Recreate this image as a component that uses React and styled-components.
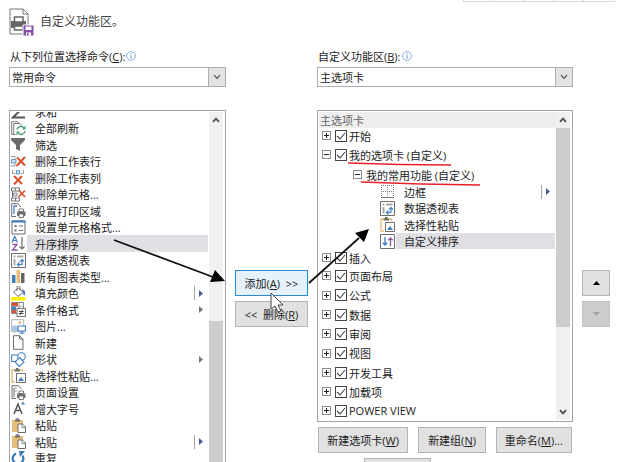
import React, { useState } from "react";
import styled, { createGlobalStyle, css } from "styled-components";

const GlobalStyle = createGlobalStyle`
  * { box-sizing: border-box; }
  body { margin: 0; background: #fff; }
  body, button, select, input {
    font-family: "Open Sans", "Noto Sans CJK SC", sans-serif;
    font-size: 11px;
    color: #1c1c1c;
  }
`;

const Page = styled.div`
  position: relative;
  height: 100vh;
  overflow: hidden;
  display: flex;
  flex-direction: column;
  padding: 0 10px 0 9px;
`;

const TopStrip = styled.div`
  flex: none;
  align-self: flex-end;
  display: grid;
  grid-template-columns: repeat(5, 30px);
  height: 2px;
  margin-right: -5px;
  border: 1px solid #d9d9d9;
  border-top: 0;
`;

const TopCell = styled.span`
  border-right: 1px solid #d9d9d9;
`;

const Header = styled.header`
  flex: none;
  display: flex;
  gap: 5px;
  height: 42px;
  padding-top: 6px;
`;

const Title = styled.h1`
  margin: 6px 0 0;
  font-size: 12px;
  line-height: 16px;
  font-weight: 400;
  color: #444;
`;

const Columns = styled.main`
  flex: 1;
  min-height: 0;
  display: grid;
  grid-template-columns: minmax(0, 217fr) 73px minmax(0, 256fr) 28px;
  grid-template-rows: minmax(0, 1fr);
  column-gap: 9px;
`;

const Column = styled.section`
  min-width: 0;
  min-height: 0;
  display: flex;
  flex-direction: column;
`;

const FieldLabel = styled.label`
  flex: none;
  display: flex;
  align-items: center;
  gap: 1px;
  height: 23px;
  padding-left: 1px;
`;

const SelectWrap = styled.div`
  flex: none;
  position: relative;
  height: 20px;
  margin-bottom: 23px;
`;

const Select = styled.select`
  display: block;
  width: 100%;
  height: 100%;
  padding: 0 20px 0 2px;
  appearance: none;
  border: 1px solid #abadb3;
  border-radius: 0;
  background: #fff;
`;

const SelectArrow = styled.span`
  position: absolute;
  inset: 0 0 0 auto;
  width: 18px;
  display: grid;
  place-items: center;
  border: 1px solid #acacac;
  background: #e3e3e3;
  pointer-events: none;
`;

const Box = styled.div`
  flex: none;
  display: flex;
  min-height: 0;
  overflow: hidden;
  padding: 1px 2px 1px 1px;
  border: 1px solid #9fa5b0;
  ${(p) => p.$fill && css`
    flex: 1;
    border-bottom: 0;
    padding-bottom: 0;
  `}
`;

const Bar = styled.div`
  flex: none;
  width: 14px;
  display: flex;
  flex-direction: column;
  background: #f0f0f0;
`;

const BarButton = styled.button`
  flex: none;
  height: 16px;
  padding: 0;
  border: 0;
  display: grid;
  place-items: center;
  background: #f0f0f0;
`;

const Thumb = styled.span`
  flex: none;
  height: ${(p) => p.$size}px;
  margin-top: ${(p) => p.$start}px;
  background: #cdcdcd;
`;

const ListView = styled.div`
  flex: 1;
  min-width: 0;
  min-height: 0;
  overflow: hidden;
`;

const CommandList = styled.ul`
  margin: -9px 0 0;
  padding: 0;
  list-style: none;
  display: grid;
  grid-auto-rows: 17px 16px;
`;

const Command = styled.li`
  display: flex;
  align-items: center;
  padding-right: 1px;
`;

const CommandIcon = styled.span`
  flex: none;
  display: grid;
  width: 16px;
`;

const CommandName = styled.span`
  flex: 1;
  align-self: stretch;
  display: flex;
  align-items: center;
  justify-content: space-between;
  padding: 0 5px 0 8px;
  white-space: nowrap;
  background: ${(p) => (p.$selected ? "#e0dfe4" : "transparent")};
`;

const Menu = styled.span`
  height: 14px;
  padding-left: 4px;
  display: flex;
  align-items: center;
  border-left: 1px solid ${(p) => (p.$split ? "#a6a6a6" : "transparent")};
`;

const ActionColumn = styled.div`
  display: flex;
  flex-direction: column;
  gap: 5px;
  padding-top: 226px;
`;

const Button = styled.button`
  flex: none;
  height: 26px;
  padding: 0;
  display: flex;
  align-items: center;
  justify-content: center;
  white-space: pre;
  border: 1px solid ${(p) => (p.$hot ? "#2a8ad4" : "#b5b5b5")};
  border-radius: 0;
  background: ${(p) => (p.$hot ? "#e5f1fb" : "#e1e1e1")};
  &:disabled {
    background: #cccccc;
    border-color: #c3c3c3;
  }
`;

const Tree = styled.ul`
  margin: 0;
  padding: 0;
  list-style: none;
  display: grid;
  grid-template-rows: 16px 15px 23px 17px 17px 16px 17px 16px 17px 19px 20px 19px 19px 20px 19px 19px 19px;
`;

const TreeHeading = styled.li`
  display: flex;
  align-items: center;
  padding-left: 1px;
  color: #666;
  background: #eeeeee;
`;

const TreeRow = styled.li`
  display: flex;
  align-items: center;
  padding-left: ${(p) => (p.$nested ? 34 : 3)}px;
`;

const TreeCommand = styled.li`
  display: flex;
  align-items: center;
  padding: 0 1px 0 61px;
`;

const Expander = styled.button`
  flex: none;
  width: 9px;
  height: 9px;
  padding: 0;
  display: grid;
  place-items: center;
  border: 1px solid #8e8e8e;
  background: #fff;
`;

const TabLabel = styled.label`
  display: flex;
  align-items: center;
  gap: 2px;
  padding-left: 4px;
  white-space: nowrap;
`;

const Tick = styled.input`
  appearance: none;
  width: 12px;
  height: 12px;
  margin: 0;
  border: 1px solid #444;
  background: #fff;
  &:checked {
    background: #fff url("data:image/svg+xml,%3Csvg xmlns='http://www.w3.org/2000/svg' viewBox='0 0 10 10'%3E%3Cpath d='M1 5l3 3 5-6' fill='none' stroke='%23444' stroke-width='1.1'/%3E%3C/svg%3E");
  }
`;

const ButtonRow = styled.div`
  flex: none;
  display: grid;
  grid-template-columns: 90fr 67fr 76fr;
  column-gap: 10px;
  margin-top: 5px;
  padding: 0 1px;
`;

const ResetRow = styled.div`
  flex: none;
  display: grid;
  grid-template-columns: 67px;
  margin: 5px 0 0 47px;
`;

const TreeBar = styled(Bar)`
  justify-content: space-between;
`;

const BarTop = styled.div`
  display: flex;
  flex-direction: column;
`;

const Overlay = styled.svg`
  position: absolute;
  left: 0;
  top: 0;
  pointer-events: none;
`;

const Info = () => (
  <svg width="10" height="10" viewBox="0 0 10 10" fill="none" stroke="#7fa9dc">
    <circle cx="5" cy="5" r="4.4" strokeWidth=".9" />
    <path d="M5 2.2v1.2M5 4.3v3.4" strokeWidth="1.2" />
  </svg>
);

const Chevron = ({ up, bold }) => (
  <svg width="8" height="6" viewBox="0 0 8 6" fill="none" stroke="#505050" strokeWidth={bold ? 1.8 : 1.2}>
    <path d={up ? "M1 4.8L4 1.6l3 3.2" : "M1 1.2l3 3.2 3-3.2"} />
  </svg>
);

const Flyout = ({ split }) => (
  <Menu $split={split}>
    <svg width="4" height="7" viewBox="0 0 4 7">
      <path d="M0 0l4 3.5L0 7z" fill={split ? "#4a5c9c" : "#777"} />
    </svg>
  </Menu>
);

const G = "#6d6d6d";
const B = "#3f7fbf";
const R = "#d9502e";
const T = "#e8bd78";

const printer = (
  <g>
    <path d="M6 8.500h8.500v4.500H6z" fill={G} />
    <path d="M8 6h4.500v2.500H8zM8 11h4.500v3.500H8z" fill="#fff" stroke={G} strokeWidth=".9" />
  </g>
);

const drawings = {
  sum: <path d="M2 1h11M2 1l6 6.500-6 6h12" fill="none" stroke="#555" strokeWidth="2" />,
  refresh: (
    <g fill="none">
      <path d="M3 13.500H.7V.7h6l1.500 1.500M4.500 13.500H2.700V2.500h6L11 4.500" stroke={G} strokeWidth=".9" />
      <path d="M6 8.500a4 4 0 0 1 7-1.500M14 10a4 4 0 0 1-7 2" stroke="#4c9f78" strokeWidth="1.500" />
      <path d="M14.500 4.500v4H11zM5.500 14.500v-4H9z" fill="#4c9f78" />
    </g>
  ),
  filter: <path d="M0 1h14v2L9 8v6l-4-2V8L0 3z" fill="#6a6a6a" />,
  row: (
    <g fill="none">
      <path d="M0 2.500h4M0 12h4M4 2.500v2M4 10v2" stroke="#999" />
      <path d="M.5 5.500H5v3.500H.5z" fill="#cfe0f2" stroke={B} strokeWidth=".8" />
      <path d="M6 3.500l8 8M14 3l-8.500 9" stroke={R} strokeWidth="2" />
    </g>
  ),
  column: (
    <g fill="none">
      <path d="M1.500 0v3.500h3M12.500 0v3.500h-3" stroke="#999" />
      <path d="M5.500 0h3v4h-3z" fill="#cfe0f2" stroke={B} strokeWidth=".8" />
      <path d="M3 6l8 8M11 6l-8 8.500" stroke={R} strokeWidth="2" />
    </g>
  ),
  cells: (
    <g fill="none">
      <path d="M.5 1h8v3h-8zM4.500 1v3M.5 11h8v3h-8zM4.500 11v3M1.500 4v7" stroke="#777" />
      <path d="M2.500 6H6v3H2.500z" fill="#dfe6ee" stroke="#777" strokeWidth=".8" />
      <path d="M8 3.500l6 6.500M14 3.500L7.500 10" stroke={R} strokeWidth="1.700" />
    </g>
  ),
  area: (
    <g fill="none">
      <path d="M5 13.500H.7V.7H7L10 4" stroke={G} />
      <path d="M3 3v8M3 3h3" stroke={B} strokeWidth="1.300" />
      {printer}
    </g>
  ),
  format: (
    <g fill="none">
      <path d="M1 1h13v13H1z" fill="#fff" stroke={G} />
      <path d="M.5 1.500h14" stroke={B} strokeWidth="2" />
      <path d="M3.500 6h2M3.500 10.500h2" stroke={G} strokeWidth="1.800" />
      <path d="M8 6h4M8 10.500h4" stroke={G} />
    </g>
  ),
  az: (
    <g fill="none">
      <path d="M1 6.500L3.700 0l2.700 6.500M2 4.500h3.500" stroke={B} strokeWidth="1.200" />
      <path d="M1.500 8.500H6L1.500 14H6.500" stroke="#8c55a8" strokeWidth="1.300" />
      <path d="M11 1v12M8.500 10.500L11 13l2.500-2.500" stroke={G} strokeWidth="1.200" />
    </g>
  ),
  pivot: (
    <g fill="none">
      <path d="M.5 .5h14v14H.5z" fill="#fff" stroke={G} />
      <path d="M2.500 2.500h2v2h-2zM6 2.500h6.500v2H6zM2.500 6h2v6.500h-2z" fill="#aaa" />
      <path d="M6.500 11.500H11V7" stroke={B} strokeWidth="1.200" />
      <path d="M8.500 9.500l-2 2 2 2M9 8.500l2-2 2 2" stroke={B} strokeWidth="1.200" />
    </g>
  ),
  chart: (
    <g>
      <path d="M1 6h3.500v8H1z" fill={B} />
      <path d="M5.500 1H9v13H5.500z" fill={T} />
      <path d="M10 4h3.500v10H10z" fill="#666" />
    </g>
  ),
  fill: (
    <g fill="none">
      <path d="M2.500 6l5-4 4.500 4.500-5 4z" fill="#fff" stroke={G} />
      <path d="M6 5V1.500a1.500 1.500 0 0 1 3 0v3" stroke={G} />
      <path d="M10.500 3.500c3 0 4 1.500 3.500 6-2-.5-2-2.500-2-4z" fill={B} />
      <path d="M0 11h14.500v3.500H0z" fill="#fff200" />
    </g>
  ),
  conditional: (
    <g fill="none">
      <path d="M.5 .5h12v11H.5z" fill="#fff" stroke="#888" />
      <path d="M1 1h6v3H1zM1 8h4v3H1z" fill={R} />
      <path d="M1 4.500h4V8H1z" fill={B} />
      <path d="M.5 4.300h12M.5 8h12M8 .5v7" stroke="#888" strokeWidth=".7" />
      <path d="M6 6.500h8.500v8H6z" fill="#fff" stroke={G} />
      <path d="M8 9.500h4.500M8 11.500h4.500M11.500 8l-2.500 5" stroke="#333" strokeWidth=".9" />
    </g>
  ),
  picture: (
    <g fill="none">
      <path d="M.7 .7h12v12H.7z" fill="#fff" stroke="#999" strokeWidth=".8" />
      <circle cx="9" cy="3.500" r="1.500" fill={T} />
      <path d="M1 12V8l3-2 3 3v3z" fill="#a9c8e8" />
      <path d="M7 7h7.500v5H7z" fill="#fff" stroke={B} strokeWidth="1.200" />
      <path d="M8.500 14.300h5M11 12v2" stroke={B} />
    </g>
  ),
  page: <path d="M2.500 .7h6L12 4v10.300H2.500zM8.500 .7V4H12" fill="#fff" stroke={G} />,
  shapes: (
    <g fill="#fff" stroke={B} strokeWidth="1.100">
      <path d="M.7 3h7v6.500h-7z" />
      <circle cx="10.500" cy="4.500" r="3.800" />
      <path d="M8.500 5.500l4.500 4.500-4.500 4.500L4 10z" />
    </g>
  ),
  special: (
    <g fill="none">
      <path d="M4 14H1V2h10.500v2" stroke={T} strokeWidth="1.400" />
      <path d="M3.500 3.500v-2H5V0h2.500v1.500H9v2z" fill={G} />
      <path d="M5.500 5.500h9v9h-9z" fill="#fff" stroke={G} />
      <path d="M7 13l3-4 3 4z" fill={B} />
    </g>
  ),
  setup: (
    <g fill="none">
      <path d="M5 13.500H1V.7h6.500L10.500 4M3 3v9" stroke={G} />
      <path d="M3 3h3M3 6h3" stroke="#999" />
      {printer}
    </g>
  ),
  grow: (
    <g fill="none">
      <path d="M3 13L7 3l4 10M4.500 9.500h5" stroke="#555" strokeWidth="1.500" />
      <path d="M10 3.500L12 .5l2 3z" fill={B} />
    </g>
  ),
  paste: (
    <g>
      <path d="M1 2h11v12H1z" fill={T} />
      <path d="M4 3.500v-2h1.500V0h2v1.500H9v2z" fill={G} />
      <path d="M7 6h4.500L14.500 9v5.500H7z" fill="#fff" stroke={G} />
      <path d="M11 6v3.500h3.500" fill="none" stroke={G} strokeWidth=".8" />
    </g>
  ),
  redo: (
    <g fill="none">
      <path d="M5 2.500a5.300 5.300 0 1 0 6.500 2" stroke="#3a78b5" strokeWidth="2.200" />
      <path d="M8 0h6l-5 6z" fill="#3a78b5" />
    </g>
  ),
  border: (
    <g fill="none" stroke="#777">
      <path d="M1.500 1v12M7.500 1v12M13.500 1v12M1 1.500h13M1 7.500h13" strokeDasharray="1 1" />
      <path d="M1 13.500h13" />
    </g>
  ),
  sort: (
    <g fill="none">
      <path d="M.5 .5h14v14H.5z" fill="#fff" stroke={G} />
      <path d="M5 3v8M2.800 8.800L5 11l2.200-2.200" stroke={B} strokeWidth="1.300" />
      <path d="M10.500 12V4M8.300 6.200L10.500 4l2.200 2.200" stroke="#8c55a8" strokeWidth="1.300" />
    </g>
  ),
};

const Icon = ({ name }) => (
  <CommandIcon>
    <svg width="15" height="15" viewBox="0 0 15 15">{drawings[name]}</svg>
  </CommandIcon>
);

const commands = [
  ["sum", "求和"],
  ["refresh", "全部刷新"],
  ["filter", "筛选"],
  ["row", "删除工作表行"],
  ["column", "删除工作表列"],
  ["cells", "删除单元格..."],
  ["area", "设置打印区域"],
  ["format", "设置单元格格式..."],
  ["az", "升序排序"],
  ["pivot", "数据透视表"],
  ["chart", "所有图表类型..."],
  ["fill", "填充颜色", "split"],
  ["conditional", "条件格式", "menu"],
  ["picture", "图片..."],
  ["page", "新建"],
  ["shapes", "形状", "menu"],
  ["special", "选择性粘贴..."],
  ["setup", "页面设置"],
  ["grow", "增大字号"],
  ["paste", "粘贴"],
  ["paste", "粘贴", "split"],
  ["redo", "重复"],
];

const groupCommands = [
  ["border", "边框", "split"],
  ["pivot", "数据透视表"],
  ["special", "选择性粘贴"],
  ["sort", "自定义排序"],
];

const tabs = ["插入", "页面布局", "公式", "数据", "审阅", "视图", "开发工具", "加载项", "POWER VIEW"];

const CommandText = ({ name, menu, selected }) => (
  <CommandName $selected={selected}>
    {name}
    {menu && <Flyout split={menu === "split"} />}
  </CommandName>
);

const Toggle = ({ open, name }) => (
  <Expander aria-label={`${open ? "折叠" : "展开"} ${name}`}>
    <svg width="7" height="7" viewBox="0 0 7 7" stroke="#222">
      <path d={open ? "M1 3.500h5" : "M1 3.500h5M3.500 1v5"} />
    </svg>
  </Expander>
);

const TabRow = ({ name, open }) => {
  const [checked, setChecked] = useState(true);
  return (
    <TreeRow>
      <Toggle open={open} name={name} />
      <TabLabel>
        <Tick type="checkbox" checked={checked} onChange={() => setChecked(!checked)} />
        {name}
      </TabLabel>
    </TreeRow>
  );
};

export default function App() {
  return (
    <Page>
      <GlobalStyle />
      <TopStrip>
        <TopCell /><TopCell /><TopCell /><TopCell />
      </TopStrip>
      <Header>
        <svg width="26" height="29" viewBox="0 0 26 29" fill="none">
          <path d="M1 1h13l5 5v20H1z" fill="#fff" stroke="#777" />
          <path d="M14 1v5h5" stroke="#777" />
          <path d="M2 13h15v7H2z" fill="#666" />
          <path d="M5.500 9h8.500v5H5.500zM5.500 18h8.500v4H5.500z" fill="#fff" stroke="#666" strokeWidth="1.500" />
          <path d="M14 17h11v11H14z" fill="#8250a5" stroke="#fff" />
          <path d="M16.500 18.500h6v3.500h-6zM17 24.500h5v3h-5z" fill="#fff" />
          <path d="M18 25h1.500v2.500H18z" fill="#8250a5" />
        </svg>
        <Title>自定义功能区。</Title>
      </Header>
      <Columns>
        <Column>
          <FieldLabel htmlFor="source">
            <span>从下列位置选择命令(<u>C</u>):</span>
            <Info />
          </FieldLabel>
          <SelectWrap>
            <Select id="source"><option>常用命令</option></Select>
            <SelectArrow><Chevron /></SelectArrow>
          </SelectWrap>
          <Box $fill>
            <ListView>
              <CommandList role="listbox" aria-label="常用命令">
                {commands.map(([icon, name, menu], i) => (
                  <Command key={i} role="option" aria-selected={icon === "az"}>
                    <Icon name={icon} />
                    <CommandText name={name} menu={menu} selected={icon === "az"} />
                  </Command>
                ))}
              </CommandList>
            </ListView>
            <Bar>
              <BarButton aria-label="向上滚动"><Chevron up bold /></BarButton>
              <Thumb $start={193} $size={300} />
            </Bar>
          </Box>
        </Column>
        <ActionColumn>
          <Button $hot>添加(<u>A</u>)  &gt;&gt;</Button>
          <Button>&lt;&lt;  删除(<u>R</u>)</Button>
        </ActionColumn>
        <Column>
          <FieldLabel htmlFor="target">
            <span>自定义功能区(<u>B</u>):</span>
            <Info />
          </FieldLabel>
          <SelectWrap>
            <Select id="target"><option>主选项卡</option></Select>
            <SelectArrow><Chevron /></SelectArrow>
          </SelectWrap>
          <Box>
            <ListView>
              <Tree>
                <TreeHeading>主选项卡</TreeHeading>
                <TabRow name="开始" />
                <TabRow name="我的选项卡 (自定义)" open />
                <TreeRow $nested>
                  <Toggle open name="我的常用功能" />
                  <TabLabel as="span">我的常用功能 (自定义)</TabLabel>
                </TreeRow>
                {groupCommands.map(([icon, name, menu]) => (
                  <TreeCommand key={name}>
                    <Icon name={icon} />
                    <CommandText name={name} menu={menu} selected={icon === "sort"} />
                  </TreeCommand>
                ))}
                {tabs.map((name) => <TabRow key={name} name={name} />)}
              </Tree>
            </ListView>
            <TreeBar>
              <BarTop>
                <BarButton aria-label="向上滚动"><Chevron up bold /></BarButton>
                <Thumb $start={0} $size={199} />
              </BarTop>
              <BarButton aria-label="向下滚动"><Chevron bold /></BarButton>
            </TreeBar>
          </Box>
          <ButtonRow>
            <Button>新建选项卡(<u>W</u>)</Button>
            <Button>新建组(<u>N</u>)</Button>
            <Button>重命名(<u>M</u>)...</Button>
          </ButtonRow>
          <ResetRow><Button aria-label="重置" /></ResetRow>
        </Column>
        <ActionColumn>
          <Button aria-label="上移">
            <svg width="7" height="4" viewBox="0 0 7 4"><path d="M0 4l3.500-4L7 4z" fill="#000" /></svg>
          </Button>
          <Button aria-label="下移" disabled>
            <svg width="7" height="4" viewBox="0 0 7 4"><path d="M0 0l3.500 4L7 0z" fill="#a3a3a3" /></svg>
          </Button>
        </ActionColumn>
      </Columns>
      <Overlay width="620" height="462" viewBox="0 0 620 462" fill="none">
        <path d="M348 163l52 1.500 51 .5M361 182l60 2 59 1" stroke="#e8202c" strokeWidth="1.600" />
        <path d="M114 240l99 37M309 283l50-45" stroke="#111" strokeWidth="1.800" />
        <path d="M225 281l-15 1 5-12zM369 229l-5 13-9-9z" fill="#000" />
        <path d="M271 293v16l4-3 3 6 3-1-3-6h5z" fill="#fff" stroke="#444" />
      </Overlay>
    </Page>
  );
}
